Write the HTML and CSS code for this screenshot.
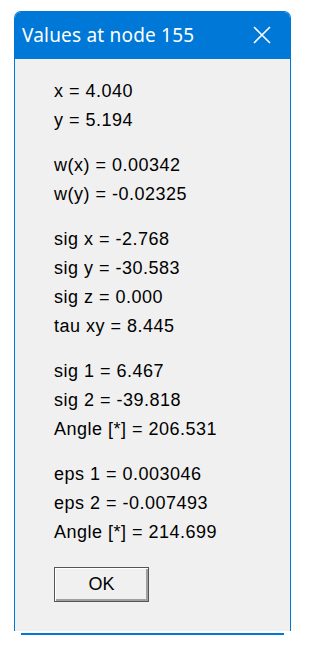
FILE: index.html
```html
<!DOCTYPE html>
<html lang="en">
<head>
    <meta charset="UTF-8">
    <meta name="viewport" content="width=device-width, initial-scale=1.0">
    <title>Values at node 155</title>
    <link rel="stylesheet" href="styles.css">
</head>
<body>

    <div class="dialog"> <!-- Dialog window -->
        <div class="titlebar">
            <span class="title">Values at node 155</span>
            <svg class="close" width="18" height="18" viewBox="0 0 18 18">
                <path d="M1 1 L17 17 M17 1 L1 17" stroke="#fff" stroke-width="1.6" fill="none"/>
            </svg>
        </div>

        <div class="content">
            <div class="group">
                <div class="line">x = 4.040</div>
                <div class="line">y = 5.194</div>
            </div>
            <div class="group">
                <div class="line">w(x) = 0.00342</div>
                <div class="line">w(y) = -0.02325</div>
            </div>
            <div class="group">
                <div class="line">sig x = -2.768</div>
                <div class="line">sig y = -30.583</div>
                <div class="line">sig z = 0.000</div>
                <div class="line">tau xy = 8.445</div>
            </div>
            <div class="group">
                <div class="line">sig 1 = 6.467</div>
                <div class="line">sig 2 = -39.818</div>
                <div class="line">Angle [*] = 206.531</div>
            </div>
            <div class="group">
                <div class="line">eps 1 = 0.003046</div>
                <div class="line">eps 2 = -0.007493</div>
                <div class="line">Angle [*] = 214.699</div>
            </div>

            <button type="button" class="ok-button">OK</button>
        </div>
    </div>
    <div class="dialog-edge"></div>

</body>
</html>
```

FILE: styles.css
```css
/* Page */
body {
    margin: 0;
    padding: 11px 0 0 14px;
    background-color: #fff;
    font-family: 'Liberation Sans', Arial, sans-serif;
}

/* Dialog window */
.dialog {
    width: 275px;
    border: 1px solid #0078d7;
    border-bottom: none;
    border-radius: 7px 7px 0 0;
    background-color: #f0f0f0;
    overflow: hidden;
}

.titlebar {
    height: 46px;
    background-color: #0078d7;
    display: flex;
    align-items: center;
    justify-content: space-between;
    padding: 0 19px 1px 7px;
}

.title {
    color: #fff;
    font-family: 'Noto Sans', sans-serif;
    font-size: 19px;
    letter-spacing: 0.2px;
}

.close {
    display: block;
}

.content {
    padding: 18px 0 29px 39px;
    color: #000;
    font-size: 18px;
    letter-spacing: 0.5px;
}

.group + .group {
    margin-top: 16px;
}

.line {
    line-height: 29px;
}

/* Classic 3D button */
.ok-button {
    display: block;
    margin-top: 20px;
    width: 95px;
    height: 35px;
    padding: 0;
    font-family: 'Liberation Sans', Arial, sans-serif;
    font-size: 18px;
    color: #000;
    background-color: #f0f0f0;
    border: 1px solid #555;
    box-shadow: inset 1px 1px 0 #fff, inset -2px -2px 0 #a0a0a0;
    cursor: pointer;
}

/* Bottom shadow line under the window */
.dialog-edge {
    width: 263px;
    height: 2px;
    margin: 2px 0 0 7px;
    background-color: #0078d7;
}
```
